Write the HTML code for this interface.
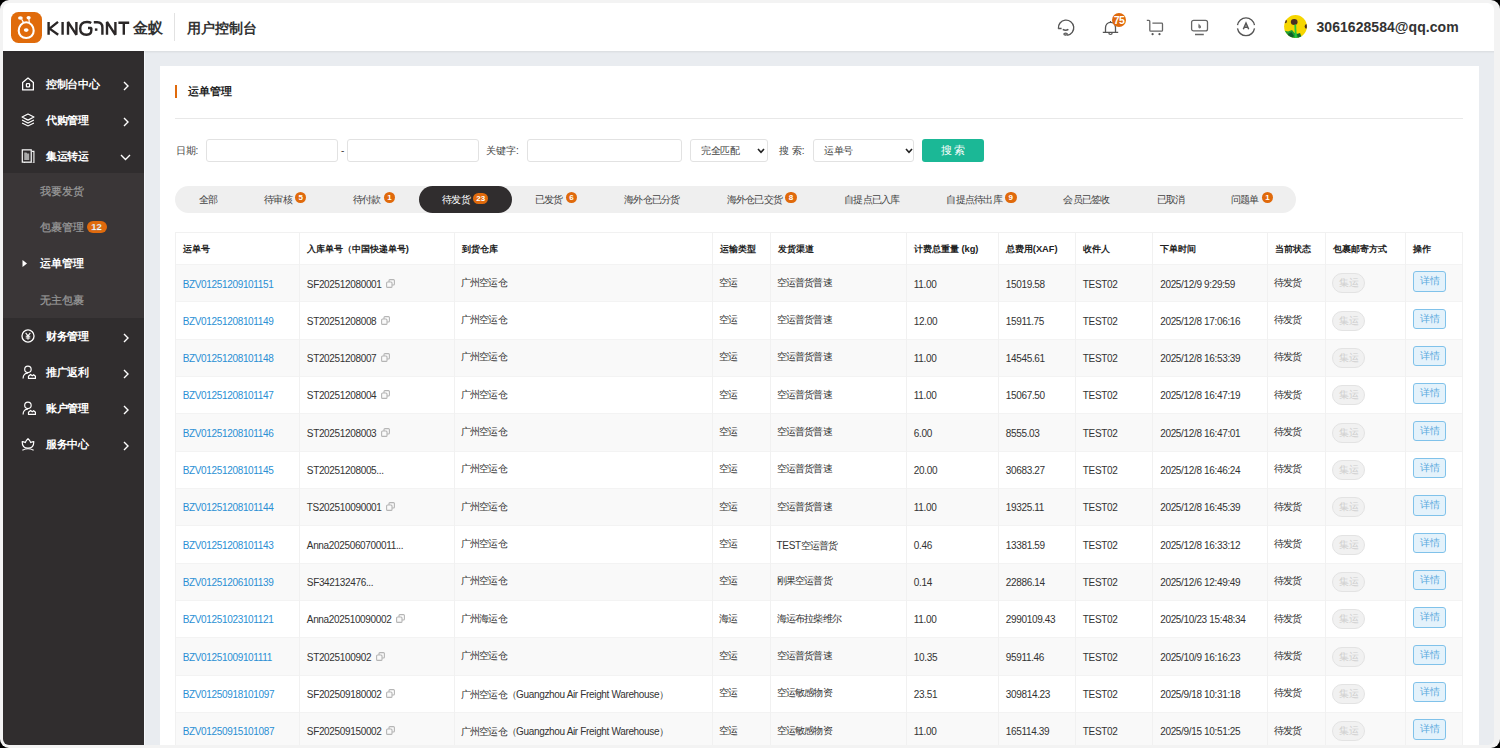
<!DOCTYPE html>
<html><head><meta charset="utf-8">
<style>
html,body{margin:0;padding:0;}
body{width:1500px;height:748px;overflow:hidden;position:relative;background:#000;font-family:"Liberation Sans", sans-serif;}
.abs{position:absolute;}
#frame{position:absolute;left:0;top:0;width:1500px;height:748px;background:#f3f3f3;border-radius:9px;}
#app{position:absolute;left:3px;top:3px;width:1491px;height:742px;border-radius:6px;overflow:hidden;background:#e9ecf0;}
#app > *{}
.tb{position:absolute;}
.th{position:absolute;font-size:9.3px;font-weight:bold;color:#222;white-space:nowrap;}
.td{position:absolute;font-size:10px;letter-spacing:-0.34px;color:#333;white-space:nowrap;}
.lk{color:#2a8fd4;}
.c{font-size:9.8px;letter-spacing:-0.8px;}
.cp{vertical-align:0px;}
.pill{position:relative;top:-1.5px;display:inline-block;width:31px;height:18px;line-height:18px;border:1px solid #e3e3e3;border-radius:10px;background:#f1f1f1;color:#cfcfcf;text-align:center;font-size:9.5px;vertical-align:middle;margin-left:-0.5px;}
.det{position:relative;top:-1.5px;display:inline-block;width:30.8px;height:18.3px;line-height:18.3px;border:1px solid #80c2ea;border-radius:3px;background:#e4f2fb;color:#5aa9dd;text-align:center;font-size:9.5px;vertical-align:middle;margin-top:-3.5px}
.tab{position:absolute;top:186px;height:27px;line-height:28.5px;text-align:center;font-size:10.2px;letter-spacing:-0.75px;color:#444;white-space:nowrap;}
.tab.act{background:#302d2e;border-radius:13.5px;color:#fff;}
.tt{display:inline-block;}
.bdg{letter-spacing:0;display:inline-block;width:11.6px;height:11.6px;line-height:11.6px;border-radius:6px;background:#e06a0c;color:#fff;font-size:8px;font-weight:bold;vertical-align:top;margin-top:5.8px;margin-left:3.1px;text-align:center;}
.bdg.w{width:15.2px;height:11px;line-height:11px;margin-top:6.5px;}
.sb{position:absolute;height:36px;line-height:36px;font-size:11px;letter-spacing:-0.3px;font-weight:bold;color:#fff;white-space:nowrap;}
.sub{position:absolute;height:36px;line-height:36px;font-size:10.5px;-webkit-text-stroke:0.25px #999;color:#999;white-space:nowrap;}
.sub.act{color:#fff;font-weight:bold;-webkit-text-stroke:0;}
.sbdg{display:inline-block;width:20px;height:12px;line-height:12px;border-radius:6px;background:#e06a0c;color:#fff;font-size:9.5px;font-weight:bold;text-align:center;vertical-align:middle;margin-left:2.5px;margin-top:-4px;}
.lbl{position:absolute;font-size:10px;color:#444;white-space:nowrap;line-height:23px;top:139px;}
.inp{position:absolute;top:139px;height:23px;box-sizing:border-box;border:1px solid #e2e2e2;border-radius:3px;background:#fff;}
.seltxt{position:absolute;font-size:10px;letter-spacing:-0.5px;color:#444;line-height:21px;left:10px;top:0;}
</style></head><body>
<div id="frame"></div>
<div id="app">
<div style="position:absolute;left:-3px;top:-3px;width:1500px;height:760px;">
<div class="abs" style="left:3px;top:51px;width:141px;height:700px;background:#302d2e"></div>
<div class="abs" style="left:3px;top:173px;width:141px;height:144.5px;background:#3a3637"></div>
<svg class="abs" style="left:21px;top:76.5px" width="14" height="14" viewBox="0 0 13 13"><path d="M1.5 5.2 L6.5 1 L11.5 5.2 V12 H1.5 Z" fill="none" stroke="#fff" stroke-width="1.2" stroke-linejoin="round"/><rect x="5" y="6.2" width="3" height="3" rx="0.6" fill="none" stroke="#fff" stroke-width="1.1"/></svg>
<div class="sb" style="left:46px;top:65.5px">控制台中心</div>
<svg class="abs" style="left:122px;top:81.0px" width="8" height="10" viewBox="0 0 8 10"><path d="M2 1 L6 5 L2 9" fill="none" stroke="#fff" stroke-width="1.4"/></svg>
<svg class="abs" style="left:21px;top:112.5px" width="14" height="14" viewBox="0 0 13 13"><path d="M6.5 1 L12 3.8 L6.5 6.6 L1 3.8 Z" fill="none" stroke="#fff" stroke-width="1.1" stroke-linejoin="round"/><path d="M1 6.5 L6.5 9.3 L12 6.5" fill="none" stroke="#fff" stroke-width="1.1"/><path d="M1 9.2 L6.5 12 L12 9.2" fill="none" stroke="#fff" stroke-width="1.1"/></svg>
<div class="sb" style="left:46px;top:101.5px">代购管理</div>
<svg class="abs" style="left:122px;top:117.0px" width="8" height="10" viewBox="0 0 8 10"><path d="M2 1 L6 5 L2 9" fill="none" stroke="#fff" stroke-width="1.4"/></svg>
<svg class="abs" style="left:21px;top:148.5px" width="14" height="14" viewBox="0 0 13 13"><rect x="1.2" y="0.8" width="8.3" height="11.4" fill="none" stroke="#fff" stroke-width="1.1"/><path d="M10.3 2.2 H12 V13.2 H3.2 V12.4" fill="none" stroke="#fff" stroke-width="1"/><path d="M3 3.2 H5 L5.8 4.2 H7.6 V10.2 H3 Z" fill="#aaa"/></svg>
<div class="sb" style="left:46px;top:137.5px">集运转运</div>
<svg class="abs" style="left:120px;top:152.5px" width="11" height="8" viewBox="0 0 11 8"><path d="M1 2 L5.5 6.5 L10 2" fill="none" stroke="#fff" stroke-width="1.4"/></svg>
<svg class="abs" style="left:21px;top:328.5px" width="14" height="14" viewBox="0 0 13 13"><circle cx="6.5" cy="6.5" r="5.6" fill="none" stroke="#fff" stroke-width="1.2"/><path d="M4.3 3.6 L6.5 6.4 L8.7 3.6 M6.5 6.4 V10 M4.4 6.8 H8.6 M4.4 8.4 H8.6" fill="none" stroke="#fff" stroke-width="1"/></svg>
<div class="sb" style="left:46px;top:317.5px">财务管理</div>
<svg class="abs" style="left:122px;top:333.0px" width="8" height="10" viewBox="0 0 8 10"><path d="M2 1 L6 5 L2 9" fill="none" stroke="#fff" stroke-width="1.4"/></svg>
<svg class="abs" style="left:22px;top:364.5px" width="14" height="14" viewBox="0 0 13 13"><circle cx="5.5" cy="4" r="3" fill="none" stroke="#fff" stroke-width="1.1"/><path d="M1 12.5 C1 9 3 7.5 5.5 7.5" fill="none" stroke="#fff" stroke-width="1.1"/><path d="M6 12.5 H12.5 V10.5 L10.8 9 L9.5 10 L8 8.8 L6 10.5 Z" fill="none" stroke="#fff" stroke-width="1.1" stroke-linejoin="round"/></svg>
<div class="sb" style="left:46px;top:353.5px">推广返利</div>
<svg class="abs" style="left:122px;top:369.0px" width="8" height="10" viewBox="0 0 8 10"><path d="M2 1 L6 5 L2 9" fill="none" stroke="#fff" stroke-width="1.4"/></svg>
<svg class="abs" style="left:22px;top:400.5px" width="14" height="14" viewBox="0 0 13 13"><circle cx="5.5" cy="4" r="3" fill="none" stroke="#fff" stroke-width="1.1"/><path d="M1 12.5 C1 9 3 7.5 5.5 7.5" fill="none" stroke="#fff" stroke-width="1.1"/><path d="M6 12.5 H12.5 V10.5 L10.8 9 L9.5 10 L8 8.8 L6 10.5 Z" fill="none" stroke="#fff" stroke-width="1.1" stroke-linejoin="round"/></svg>
<div class="sb" style="left:46px;top:389.5px">账户管理</div>
<svg class="abs" style="left:122px;top:405.0px" width="8" height="10" viewBox="0 0 8 10"><path d="M2 1 L6 5 L2 9" fill="none" stroke="#fff" stroke-width="1.4"/></svg>
<svg class="abs" style="left:21px;top:436.5px" width="14" height="14" viewBox="0 0 13 13"><path d="M6.5 1.6 C8 2.9 8.8 4.2 9 5.2 C10 4.6 11 4.3 11.9 4.3 C11.9 8.4 9.8 10.4 6.5 10.4 C3.2 10.4 1.1 8.4 1.1 4.3 C2 4.3 3 4.6 4 5.2 C4.2 4.2 5 2.9 6.5 1.6 Z" fill="none" stroke="#fff" stroke-width="1.1" stroke-linejoin="round"/><path d="M1.3 12.3 Q3.5 10.9 6.5 10.9 Q9.5 10.9 11.7 12.3" fill="none" stroke="#fff" stroke-width="1.1"/></svg>
<div class="sb" style="left:46px;top:425.5px">服务中心</div>
<svg class="abs" style="left:122px;top:441.0px" width="8" height="10" viewBox="0 0 8 10"><path d="M2 1 L6 5 L2 9" fill="none" stroke="#fff" stroke-width="1.4"/></svg>
<div class="sub" style="left:40px;top:173.4px">我要发货</div>
<div class="sub" style="left:40px;top:209.4px">包裹管理<span class="sbdg">12</span></div>
<div class="sub act" style="left:40px;top:245.2px">运单管理</div>
<svg class="abs" style="left:22px;top:259.7px" width="6" height="7" viewBox="0 0 6 7"><path d="M0.5 0 L5 3.5 L0.5 7 Z" fill="#fff"/></svg>
<div class="sub" style="left:40px;top:281.5px">无主包裹</div>
<div class="abs" style="left:144px;top:51px;width:1px;height:700px;background:#f5f8fc"></div>

<!-- card -->
<div class="abs" style="left:160px;top:66px;width:1319px;height:700px;background:#fff"></div>
<div class="abs" style="left:175px;top:85px;width:2px;height:13px;background:#e06a0c"></div>
<div class="abs" style="left:188px;top:79px;font-size:10.5px;line-height:24px;color:#222;font-weight:bold;white-space:nowrap">运单管理</div>
<div class="abs" style="left:175px;top:118px;width:1288px;height:1px;background:#e8e8e8"></div>

<div class="lbl" style="left:175.5px">日期:</div>
<div class="inp" style="left:206px;width:132px"></div>
<div class="lbl" style="left:341px">-</div>
<div class="inp" style="left:347px;width:131.5px"></div>
<div class="lbl" style="left:486px">关键字:</div>
<div class="inp" style="left:527px;width:155px"></div>
<div class="inp" style="left:690px;width:77.5px"><span class="seltxt">完全匹配</span>
 <svg class="abs" style="left:65.5px;top:8px" width="8" height="6" viewBox="0 0 8 6"><path d="M1 1 L4 4.3 L7 1" fill="none" stroke="#222" stroke-width="1.6"/></svg></div>
<div class="lbl" style="left:779px">搜 索:</div>
<div class="inp" style="left:813px;width:100.5px"><span class="seltxt">运单号</span>
 <svg class="abs" style="left:90.5px;top:8px" width="8" height="6" viewBox="0 0 8 6"><path d="M1 1 L4 4.3 L7 1" fill="none" stroke="#222" stroke-width="1.6"/></svg></div>
<div class="abs" style="left:922px;top:139px;width:62px;height:23px;border-radius:3px;background:#1bb896;color:#fff;font-size:10.5px;line-height:23px;text-align:center;white-space:nowrap">搜 索</div>

<div class="abs" style="left:175px;top:186px;width:1121.3px;height:27px;border-radius:13.5px;background:#efefef"></div>
<div class="tab" style="left:175.0px;width:66.0px"><span class="tt">全部</span></div>
<div class="tab" style="left:241.0px;width:88.5px"><span class="tt">待审核</span><span class="bdg">5</span></div>
<div class="tab" style="left:329.5px;width:89.19999999999999px"><span class="tt">待付款</span><span class="bdg">1</span></div>
<div class="tab act" style="left:418.7px;width:93.10000000000002px"><span class="tt">待发货</span><span class="bdg w">23</span></div>
<div class="tab" style="left:511.8px;width:88.69999999999999px"><span class="tt">已发货</span><span class="bdg">6</span></div>
<div class="tab" style="left:600.5px;width:102.70000000000005px"><span class="tt">海外仓已分货</span></div>
<div class="tab" style="left:703.2px;width:117.19999999999993px"><span class="tt">海外仓已交货</span><span class="bdg">8</span></div>
<div class="tab" style="left:820.4px;width:102.80000000000007px"><span class="tt">自提点已入库</span></div>
<div class="tab" style="left:923.2px;width:116.70000000000005px"><span class="tt">自提点待出库</span><span class="bdg">9</span></div>
<div class="tab" style="left:1039.9px;width:93.39999999999986px"><span class="tt">会员已签收</span></div>
<div class="tab" style="left:1133.3px;width:74.40000000000009px"><span class="tt">已取消</span></div>
<div class="tab" style="left:1207.7px;width:88.59999999999991px"><span class="tt">问题单</span><span class="bdg">1</span></div>

<div class="tb" style="left:175.2px;top:232.0px;width:1287.2px;height:32.0px;background:#fff"></div>
<div class="tb" style="left:175.2px;top:264.0px;width:1287.2px;height:37.33px;background:#f9f9f9;border-top:1px solid #f3f3f3;box-sizing:border-box"></div>
<div class="tb" style="left:175.2px;top:301.33px;width:1287.2px;height:37.33px;background:#ffffff;border-top:1px solid #f3f3f3;box-sizing:border-box"></div>
<div class="tb" style="left:175.2px;top:338.65999999999997px;width:1287.2px;height:37.33px;background:#f9f9f9;border-top:1px solid #f3f3f3;box-sizing:border-box"></div>
<div class="tb" style="left:175.2px;top:375.99px;width:1287.2px;height:37.33px;background:#ffffff;border-top:1px solid #f3f3f3;box-sizing:border-box"></div>
<div class="tb" style="left:175.2px;top:413.32px;width:1287.2px;height:37.33px;background:#f9f9f9;border-top:1px solid #f3f3f3;box-sizing:border-box"></div>
<div class="tb" style="left:175.2px;top:450.65px;width:1287.2px;height:37.33px;background:#ffffff;border-top:1px solid #f3f3f3;box-sizing:border-box"></div>
<div class="tb" style="left:175.2px;top:487.98px;width:1287.2px;height:37.33px;background:#f9f9f9;border-top:1px solid #f3f3f3;box-sizing:border-box"></div>
<div class="tb" style="left:175.2px;top:525.31px;width:1287.2px;height:37.33px;background:#ffffff;border-top:1px solid #f3f3f3;box-sizing:border-box"></div>
<div class="tb" style="left:175.2px;top:562.64px;width:1287.2px;height:37.33px;background:#f9f9f9;border-top:1px solid #f3f3f3;box-sizing:border-box"></div>
<div class="tb" style="left:175.2px;top:599.97px;width:1287.2px;height:37.33px;background:#ffffff;border-top:1px solid #f3f3f3;box-sizing:border-box"></div>
<div class="tb" style="left:175.2px;top:637.3px;width:1287.2px;height:37.33px;background:#f9f9f9;border-top:1px solid #f3f3f3;box-sizing:border-box"></div>
<div class="tb" style="left:175.2px;top:674.63px;width:1287.2px;height:37.33px;background:#ffffff;border-top:1px solid #f3f3f3;box-sizing:border-box"></div>
<div class="tb" style="left:175.2px;top:711.96px;width:1287.2px;height:37.33px;background:#f9f9f9;border-top:1px solid #f3f3f3;box-sizing:border-box"></div>
<div class="tb" style="left:175.2px;top:232.0px;width:1287.2px;height:1px;background:#f1f1f1"></div>
<div class="tb" style="left:174.7px;top:232.0px;width:1px;height:528.0px;background:#f1f1f1"></div>
<div class="tb" style="left:298.8px;top:232.0px;width:1px;height:528.0px;background:#f1f1f1"></div>
<div class="tb" style="left:454.1px;top:232.0px;width:1px;height:528.0px;background:#f1f1f1"></div>
<div class="tb" style="left:712.0px;top:232.0px;width:1px;height:528.0px;background:#f1f1f1"></div>
<div class="tb" style="left:769.8px;top:232.0px;width:1px;height:528.0px;background:#f1f1f1"></div>
<div class="tb" style="left:905.8px;top:232.0px;width:1px;height:528.0px;background:#f1f1f1"></div>
<div class="tb" style="left:997.8px;top:232.0px;width:1px;height:528.0px;background:#f1f1f1"></div>
<div class="tb" style="left:1074.8px;top:232.0px;width:1px;height:528.0px;background:#f1f1f1"></div>
<div class="tb" style="left:1152.2px;top:232.0px;width:1px;height:528.0px;background:#f1f1f1"></div>
<div class="tb" style="left:1266.8px;top:232.0px;width:1px;height:528.0px;background:#f1f1f1"></div>
<div class="tb" style="left:1324.8px;top:232.0px;width:1px;height:528.0px;background:#f1f1f1"></div>
<div class="tb" style="left:1405.4px;top:232.0px;width:1px;height:528.0px;background:#f1f1f1"></div>
<div class="tb" style="left:1461.9px;top:232.0px;width:1px;height:528.0px;background:#f1f1f1"></div>
<div class="th" style="left:182.7px;top:232.6px;height:32.0px;line-height:32.0px">运单号</div>
<div class="th" style="left:306.8px;top:232.6px;height:32.0px;line-height:32.0px">入库单号（中国快递单号)</div>
<div class="th" style="left:462.1px;top:232.6px;height:32.0px;line-height:32.0px">到货仓库</div>
<div class="th" style="left:720.0px;top:232.6px;height:32.0px;line-height:32.0px">运输类型</div>
<div class="th" style="left:777.8px;top:232.6px;height:32.0px;line-height:32.0px">发货渠道</div>
<div class="th" style="left:913.8px;top:232.6px;height:32.0px;line-height:32.0px">计费总重量 (kg)</div>
<div class="th" style="left:1005.8px;top:232.6px;height:32.0px;line-height:32.0px">总费用(XAF)</div>
<div class="th" style="left:1082.8px;top:232.6px;height:32.0px;line-height:32.0px">收件人</div>
<div class="th" style="left:1160.2px;top:232.6px;height:32.0px;line-height:32.0px">下单时间</div>
<div class="th" style="left:1274.8px;top:232.6px;height:32.0px;line-height:32.0px">当前状态</div>
<div class="th" style="left:1332.8px;top:232.6px;height:32.0px;line-height:32.0px">包裹邮寄方式</div>
<div class="th" style="left:1413.4px;top:232.6px;height:32.0px;line-height:32.0px">操作</div>
<div class="td" style="left:182.7px;top:265.5px;height:37.33px;line-height:37.33px"><span class="lk">BZV01251209101151</span></div>
<div class="td" style="left:306.8px;top:265.5px;height:37.33px;line-height:37.33px">SF202512080001 &nbsp;<svg class="cp" width="9" height="9" viewBox="0 0 9 9"><rect x="3" y="0.6" width="5.4" height="5.4" rx="1" fill="none" stroke="#b5b5b5" stroke-width="1.1"/><rect x="0.6" y="3" width="5.4" height="5.4" rx="1" fill="#fafafa" stroke="#b5b5b5" stroke-width="1.1"/></svg></div>
<div class="td" style="left:460.90000000000003px;top:263.7px;height:37.33px;line-height:37.33px"><span class="c">广州空运仓</span></div>
<div class="td" style="left:718.8px;top:263.7px;height:37.33px;line-height:37.33px"><span class="c">空运</span></div>
<div class="td" style="left:776.5999999999999px;top:263.7px;height:37.33px;line-height:37.33px"><span class="c">空运普货普速</span></div>
<div class="td" style="left:913.8px;top:265.5px;height:37.33px;line-height:37.33px">11.00</div>
<div class="td" style="left:1005.8px;top:265.5px;height:37.33px;line-height:37.33px">15019.58</div>
<div class="td" style="left:1082.8px;top:265.5px;height:37.33px;line-height:37.33px">TEST02</div>
<div class="td" style="left:1160.2px;top:265.5px;height:37.33px;line-height:37.33px">2025/12/9 9:29:59</div>
<div class="td" style="left:1273.6px;top:263.7px;height:37.33px;line-height:37.33px"><span class="c">待发货</span></div>
<div class="td" style="left:1332.8px;top:265.5px;height:37.33px;line-height:37.33px"><span class="pill">集运</span></div>
<div class="td" style="left:1413.4px;top:265.5px;height:37.33px;line-height:37.33px"><span class="det">详情</span></div>
<div class="td" style="left:182.7px;top:302.83px;height:37.33px;line-height:37.33px"><span class="lk">BZV01251208101149</span></div>
<div class="td" style="left:306.8px;top:302.83px;height:37.33px;line-height:37.33px">ST20251208008 &nbsp;<svg class="cp" width="9" height="9" viewBox="0 0 9 9"><rect x="3" y="0.6" width="5.4" height="5.4" rx="1" fill="none" stroke="#b5b5b5" stroke-width="1.1"/><rect x="0.6" y="3" width="5.4" height="5.4" rx="1" fill="#fafafa" stroke="#b5b5b5" stroke-width="1.1"/></svg></div>
<div class="td" style="left:460.90000000000003px;top:301.03px;height:37.33px;line-height:37.33px"><span class="c">广州空运仓</span></div>
<div class="td" style="left:718.8px;top:301.03px;height:37.33px;line-height:37.33px"><span class="c">空运</span></div>
<div class="td" style="left:776.5999999999999px;top:301.03px;height:37.33px;line-height:37.33px"><span class="c">空运普货普速</span></div>
<div class="td" style="left:913.8px;top:302.83px;height:37.33px;line-height:37.33px">12.00</div>
<div class="td" style="left:1005.8px;top:302.83px;height:37.33px;line-height:37.33px">15911.75</div>
<div class="td" style="left:1082.8px;top:302.83px;height:37.33px;line-height:37.33px">TEST02</div>
<div class="td" style="left:1160.2px;top:302.83px;height:37.33px;line-height:37.33px">2025/12/8 17:06:16</div>
<div class="td" style="left:1273.6px;top:301.03px;height:37.33px;line-height:37.33px"><span class="c">待发货</span></div>
<div class="td" style="left:1332.8px;top:302.83px;height:37.33px;line-height:37.33px"><span class="pill">集运</span></div>
<div class="td" style="left:1413.4px;top:302.83px;height:37.33px;line-height:37.33px"><span class="det">详情</span></div>
<div class="td" style="left:182.7px;top:340.15999999999997px;height:37.33px;line-height:37.33px"><span class="lk">BZV01251208101148</span></div>
<div class="td" style="left:306.8px;top:340.15999999999997px;height:37.33px;line-height:37.33px">ST20251208007 &nbsp;<svg class="cp" width="9" height="9" viewBox="0 0 9 9"><rect x="3" y="0.6" width="5.4" height="5.4" rx="1" fill="none" stroke="#b5b5b5" stroke-width="1.1"/><rect x="0.6" y="3" width="5.4" height="5.4" rx="1" fill="#fafafa" stroke="#b5b5b5" stroke-width="1.1"/></svg></div>
<div class="td" style="left:460.90000000000003px;top:338.35999999999996px;height:37.33px;line-height:37.33px"><span class="c">广州空运仓</span></div>
<div class="td" style="left:718.8px;top:338.35999999999996px;height:37.33px;line-height:37.33px"><span class="c">空运</span></div>
<div class="td" style="left:776.5999999999999px;top:338.35999999999996px;height:37.33px;line-height:37.33px"><span class="c">空运普货普速</span></div>
<div class="td" style="left:913.8px;top:340.15999999999997px;height:37.33px;line-height:37.33px">11.00</div>
<div class="td" style="left:1005.8px;top:340.15999999999997px;height:37.33px;line-height:37.33px">14545.61</div>
<div class="td" style="left:1082.8px;top:340.15999999999997px;height:37.33px;line-height:37.33px">TEST02</div>
<div class="td" style="left:1160.2px;top:340.15999999999997px;height:37.33px;line-height:37.33px">2025/12/8 16:53:39</div>
<div class="td" style="left:1273.6px;top:338.35999999999996px;height:37.33px;line-height:37.33px"><span class="c">待发货</span></div>
<div class="td" style="left:1332.8px;top:340.15999999999997px;height:37.33px;line-height:37.33px"><span class="pill">集运</span></div>
<div class="td" style="left:1413.4px;top:340.15999999999997px;height:37.33px;line-height:37.33px"><span class="det">详情</span></div>
<div class="td" style="left:182.7px;top:377.49px;height:37.33px;line-height:37.33px"><span class="lk">BZV01251208101147</span></div>
<div class="td" style="left:306.8px;top:377.49px;height:37.33px;line-height:37.33px">ST20251208004 &nbsp;<svg class="cp" width="9" height="9" viewBox="0 0 9 9"><rect x="3" y="0.6" width="5.4" height="5.4" rx="1" fill="none" stroke="#b5b5b5" stroke-width="1.1"/><rect x="0.6" y="3" width="5.4" height="5.4" rx="1" fill="#fafafa" stroke="#b5b5b5" stroke-width="1.1"/></svg></div>
<div class="td" style="left:460.90000000000003px;top:375.69px;height:37.33px;line-height:37.33px"><span class="c">广州空运仓</span></div>
<div class="td" style="left:718.8px;top:375.69px;height:37.33px;line-height:37.33px"><span class="c">空运</span></div>
<div class="td" style="left:776.5999999999999px;top:375.69px;height:37.33px;line-height:37.33px"><span class="c">空运普货普速</span></div>
<div class="td" style="left:913.8px;top:377.49px;height:37.33px;line-height:37.33px">11.00</div>
<div class="td" style="left:1005.8px;top:377.49px;height:37.33px;line-height:37.33px">15067.50</div>
<div class="td" style="left:1082.8px;top:377.49px;height:37.33px;line-height:37.33px">TEST02</div>
<div class="td" style="left:1160.2px;top:377.49px;height:37.33px;line-height:37.33px">2025/12/8 16:47:19</div>
<div class="td" style="left:1273.6px;top:375.69px;height:37.33px;line-height:37.33px"><span class="c">待发货</span></div>
<div class="td" style="left:1332.8px;top:377.49px;height:37.33px;line-height:37.33px"><span class="pill">集运</span></div>
<div class="td" style="left:1413.4px;top:377.49px;height:37.33px;line-height:37.33px"><span class="det">详情</span></div>
<div class="td" style="left:182.7px;top:414.82px;height:37.33px;line-height:37.33px"><span class="lk">BZV01251208101146</span></div>
<div class="td" style="left:306.8px;top:414.82px;height:37.33px;line-height:37.33px">ST20251208003 &nbsp;<svg class="cp" width="9" height="9" viewBox="0 0 9 9"><rect x="3" y="0.6" width="5.4" height="5.4" rx="1" fill="none" stroke="#b5b5b5" stroke-width="1.1"/><rect x="0.6" y="3" width="5.4" height="5.4" rx="1" fill="#fafafa" stroke="#b5b5b5" stroke-width="1.1"/></svg></div>
<div class="td" style="left:460.90000000000003px;top:413.02px;height:37.33px;line-height:37.33px"><span class="c">广州空运仓</span></div>
<div class="td" style="left:718.8px;top:413.02px;height:37.33px;line-height:37.33px"><span class="c">空运</span></div>
<div class="td" style="left:776.5999999999999px;top:413.02px;height:37.33px;line-height:37.33px"><span class="c">空运普货普速</span></div>
<div class="td" style="left:913.8px;top:414.82px;height:37.33px;line-height:37.33px">6.00</div>
<div class="td" style="left:1005.8px;top:414.82px;height:37.33px;line-height:37.33px">8555.03</div>
<div class="td" style="left:1082.8px;top:414.82px;height:37.33px;line-height:37.33px">TEST02</div>
<div class="td" style="left:1160.2px;top:414.82px;height:37.33px;line-height:37.33px">2025/12/8 16:47:01</div>
<div class="td" style="left:1273.6px;top:413.02px;height:37.33px;line-height:37.33px"><span class="c">待发货</span></div>
<div class="td" style="left:1332.8px;top:414.82px;height:37.33px;line-height:37.33px"><span class="pill">集运</span></div>
<div class="td" style="left:1413.4px;top:414.82px;height:37.33px;line-height:37.33px"><span class="det">详情</span></div>
<div class="td" style="left:182.7px;top:452.15px;height:37.33px;line-height:37.33px"><span class="lk">BZV01251208101145</span></div>
<div class="td" style="left:306.8px;top:452.15px;height:37.33px;line-height:37.33px">ST20251208005...</div>
<div class="td" style="left:460.90000000000003px;top:450.34999999999997px;height:37.33px;line-height:37.33px"><span class="c">广州空运仓</span></div>
<div class="td" style="left:718.8px;top:450.34999999999997px;height:37.33px;line-height:37.33px"><span class="c">空运</span></div>
<div class="td" style="left:776.5999999999999px;top:450.34999999999997px;height:37.33px;line-height:37.33px"><span class="c">空运普货普速</span></div>
<div class="td" style="left:913.8px;top:452.15px;height:37.33px;line-height:37.33px">20.00</div>
<div class="td" style="left:1005.8px;top:452.15px;height:37.33px;line-height:37.33px">30683.27</div>
<div class="td" style="left:1082.8px;top:452.15px;height:37.33px;line-height:37.33px">TEST02</div>
<div class="td" style="left:1160.2px;top:452.15px;height:37.33px;line-height:37.33px">2025/12/8 16:46:24</div>
<div class="td" style="left:1273.6px;top:450.34999999999997px;height:37.33px;line-height:37.33px"><span class="c">待发货</span></div>
<div class="td" style="left:1332.8px;top:452.15px;height:37.33px;line-height:37.33px"><span class="pill">集运</span></div>
<div class="td" style="left:1413.4px;top:452.15px;height:37.33px;line-height:37.33px"><span class="det">详情</span></div>
<div class="td" style="left:182.7px;top:489.48px;height:37.33px;line-height:37.33px"><span class="lk">BZV01251208101144</span></div>
<div class="td" style="left:306.8px;top:489.48px;height:37.33px;line-height:37.33px">TS202510090001 &nbsp;<svg class="cp" width="9" height="9" viewBox="0 0 9 9"><rect x="3" y="0.6" width="5.4" height="5.4" rx="1" fill="none" stroke="#b5b5b5" stroke-width="1.1"/><rect x="0.6" y="3" width="5.4" height="5.4" rx="1" fill="#fafafa" stroke="#b5b5b5" stroke-width="1.1"/></svg></div>
<div class="td" style="left:460.90000000000003px;top:487.68px;height:37.33px;line-height:37.33px"><span class="c">广州空运仓</span></div>
<div class="td" style="left:718.8px;top:487.68px;height:37.33px;line-height:37.33px"><span class="c">空运</span></div>
<div class="td" style="left:776.5999999999999px;top:487.68px;height:37.33px;line-height:37.33px"><span class="c">空运普货普速</span></div>
<div class="td" style="left:913.8px;top:489.48px;height:37.33px;line-height:37.33px">11.00</div>
<div class="td" style="left:1005.8px;top:489.48px;height:37.33px;line-height:37.33px">19325.11</div>
<div class="td" style="left:1082.8px;top:489.48px;height:37.33px;line-height:37.33px">TEST02</div>
<div class="td" style="left:1160.2px;top:489.48px;height:37.33px;line-height:37.33px">2025/12/8 16:45:39</div>
<div class="td" style="left:1273.6px;top:487.68px;height:37.33px;line-height:37.33px"><span class="c">待发货</span></div>
<div class="td" style="left:1332.8px;top:489.48px;height:37.33px;line-height:37.33px"><span class="pill">集运</span></div>
<div class="td" style="left:1413.4px;top:489.48px;height:37.33px;line-height:37.33px"><span class="det">详情</span></div>
<div class="td" style="left:182.7px;top:526.81px;height:37.33px;line-height:37.33px"><span class="lk">BZV01251208101143</span></div>
<div class="td" style="left:306.8px;top:526.81px;height:37.33px;line-height:37.33px">Anna2025060700011...</div>
<div class="td" style="left:460.90000000000003px;top:525.01px;height:37.33px;line-height:37.33px"><span class="c">广州空运仓</span></div>
<div class="td" style="left:718.8px;top:525.01px;height:37.33px;line-height:37.33px"><span class="c">空运</span></div>
<div class="td" style="left:776.5999999999999px;top:526.81px;height:37.33px;line-height:37.33px">TEST<span class="c">空运普货</span></div>
<div class="td" style="left:913.8px;top:526.81px;height:37.33px;line-height:37.33px">0.46</div>
<div class="td" style="left:1005.8px;top:526.81px;height:37.33px;line-height:37.33px">13381.59</div>
<div class="td" style="left:1082.8px;top:526.81px;height:37.33px;line-height:37.33px">TEST02</div>
<div class="td" style="left:1160.2px;top:526.81px;height:37.33px;line-height:37.33px">2025/12/8 16:33:12</div>
<div class="td" style="left:1273.6px;top:525.01px;height:37.33px;line-height:37.33px"><span class="c">待发货</span></div>
<div class="td" style="left:1332.8px;top:526.81px;height:37.33px;line-height:37.33px"><span class="pill">集运</span></div>
<div class="td" style="left:1413.4px;top:526.81px;height:37.33px;line-height:37.33px"><span class="det">详情</span></div>
<div class="td" style="left:182.7px;top:564.14px;height:37.33px;line-height:37.33px"><span class="lk">BZV01251206101139</span></div>
<div class="td" style="left:306.8px;top:564.14px;height:37.33px;line-height:37.33px">SF342132476...</div>
<div class="td" style="left:460.90000000000003px;top:562.34px;height:37.33px;line-height:37.33px"><span class="c">广州空运仓</span></div>
<div class="td" style="left:718.8px;top:562.34px;height:37.33px;line-height:37.33px"><span class="c">空运</span></div>
<div class="td" style="left:776.5999999999999px;top:562.34px;height:37.33px;line-height:37.33px"><span class="c">刚果空运普货</span></div>
<div class="td" style="left:913.8px;top:564.14px;height:37.33px;line-height:37.33px">0.14</div>
<div class="td" style="left:1005.8px;top:564.14px;height:37.33px;line-height:37.33px">22886.14</div>
<div class="td" style="left:1082.8px;top:564.14px;height:37.33px;line-height:37.33px">TEST02</div>
<div class="td" style="left:1160.2px;top:564.14px;height:37.33px;line-height:37.33px">2025/12/6 12:49:49</div>
<div class="td" style="left:1273.6px;top:562.34px;height:37.33px;line-height:37.33px"><span class="c">待发货</span></div>
<div class="td" style="left:1332.8px;top:564.14px;height:37.33px;line-height:37.33px"><span class="pill">集运</span></div>
<div class="td" style="left:1413.4px;top:564.14px;height:37.33px;line-height:37.33px"><span class="det">详情</span></div>
<div class="td" style="left:182.7px;top:601.47px;height:37.33px;line-height:37.33px"><span class="lk">BZV01251023101121</span></div>
<div class="td" style="left:306.8px;top:601.47px;height:37.33px;line-height:37.33px">Anna202510090002 &nbsp;<svg class="cp" width="9" height="9" viewBox="0 0 9 9"><rect x="3" y="0.6" width="5.4" height="5.4" rx="1" fill="none" stroke="#b5b5b5" stroke-width="1.1"/><rect x="0.6" y="3" width="5.4" height="5.4" rx="1" fill="#fafafa" stroke="#b5b5b5" stroke-width="1.1"/></svg></div>
<div class="td" style="left:460.90000000000003px;top:599.6700000000001px;height:37.33px;line-height:37.33px"><span class="c">广州海运仓</span></div>
<div class="td" style="left:718.8px;top:599.6700000000001px;height:37.33px;line-height:37.33px"><span class="c">海运</span></div>
<div class="td" style="left:776.5999999999999px;top:599.6700000000001px;height:37.33px;line-height:37.33px"><span class="c">海运布拉柴维尔</span></div>
<div class="td" style="left:913.8px;top:601.47px;height:37.33px;line-height:37.33px">11.00</div>
<div class="td" style="left:1005.8px;top:601.47px;height:37.33px;line-height:37.33px">2990109.43</div>
<div class="td" style="left:1082.8px;top:601.47px;height:37.33px;line-height:37.33px">TEST02</div>
<div class="td" style="left:1160.2px;top:601.47px;height:37.33px;line-height:37.33px">2025/10/23 15:48:34</div>
<div class="td" style="left:1273.6px;top:599.6700000000001px;height:37.33px;line-height:37.33px"><span class="c">待发货</span></div>
<div class="td" style="left:1332.8px;top:601.47px;height:37.33px;line-height:37.33px"><span class="pill">集运</span></div>
<div class="td" style="left:1413.4px;top:601.47px;height:37.33px;line-height:37.33px"><span class="det">详情</span></div>
<div class="td" style="left:182.7px;top:638.8px;height:37.33px;line-height:37.33px"><span class="lk">BZV01251009101111</span></div>
<div class="td" style="left:306.8px;top:638.8px;height:37.33px;line-height:37.33px">ST2025100902 &nbsp;<svg class="cp" width="9" height="9" viewBox="0 0 9 9"><rect x="3" y="0.6" width="5.4" height="5.4" rx="1" fill="none" stroke="#b5b5b5" stroke-width="1.1"/><rect x="0.6" y="3" width="5.4" height="5.4" rx="1" fill="#fafafa" stroke="#b5b5b5" stroke-width="1.1"/></svg></div>
<div class="td" style="left:460.90000000000003px;top:637.0px;height:37.33px;line-height:37.33px"><span class="c">广州空运仓</span></div>
<div class="td" style="left:718.8px;top:637.0px;height:37.33px;line-height:37.33px"><span class="c">空运</span></div>
<div class="td" style="left:776.5999999999999px;top:637.0px;height:37.33px;line-height:37.33px"><span class="c">空运普货普速</span></div>
<div class="td" style="left:913.8px;top:638.8px;height:37.33px;line-height:37.33px">10.35</div>
<div class="td" style="left:1005.8px;top:638.8px;height:37.33px;line-height:37.33px">95911.46</div>
<div class="td" style="left:1082.8px;top:638.8px;height:37.33px;line-height:37.33px">TEST02</div>
<div class="td" style="left:1160.2px;top:638.8px;height:37.33px;line-height:37.33px">2025/10/9 16:16:23</div>
<div class="td" style="left:1273.6px;top:637.0px;height:37.33px;line-height:37.33px"><span class="c">待发货</span></div>
<div class="td" style="left:1332.8px;top:638.8px;height:37.33px;line-height:37.33px"><span class="pill">集运</span></div>
<div class="td" style="left:1413.4px;top:638.8px;height:37.33px;line-height:37.33px"><span class="det">详情</span></div>
<div class="td" style="left:182.7px;top:676.13px;height:37.33px;line-height:37.33px"><span class="lk">BZV01250918101097</span></div>
<div class="td" style="left:306.8px;top:676.13px;height:37.33px;line-height:37.33px">SF202509180002 &nbsp;<svg class="cp" width="9" height="9" viewBox="0 0 9 9"><rect x="3" y="0.6" width="5.4" height="5.4" rx="1" fill="none" stroke="#b5b5b5" stroke-width="1.1"/><rect x="0.6" y="3" width="5.4" height="5.4" rx="1" fill="#fafafa" stroke="#b5b5b5" stroke-width="1.1"/></svg></div>
<div class="td" style="left:460.90000000000003px;top:676.13px;height:37.33px;line-height:37.33px"><span class="c">广州空运仓（</span>Guangzhou Air Freight Warehouse<span class="c">）</span></div>
<div class="td" style="left:718.8px;top:674.33px;height:37.33px;line-height:37.33px"><span class="c">空运</span></div>
<div class="td" style="left:776.5999999999999px;top:674.33px;height:37.33px;line-height:37.33px"><span class="c">空运敏感物资</span></div>
<div class="td" style="left:913.8px;top:676.13px;height:37.33px;line-height:37.33px">23.51</div>
<div class="td" style="left:1005.8px;top:676.13px;height:37.33px;line-height:37.33px">309814.23</div>
<div class="td" style="left:1082.8px;top:676.13px;height:37.33px;line-height:37.33px">TEST02</div>
<div class="td" style="left:1160.2px;top:676.13px;height:37.33px;line-height:37.33px">2025/9/18 10:31:18</div>
<div class="td" style="left:1273.6px;top:674.33px;height:37.33px;line-height:37.33px"><span class="c">待发货</span></div>
<div class="td" style="left:1332.8px;top:676.13px;height:37.33px;line-height:37.33px"><span class="pill">集运</span></div>
<div class="td" style="left:1413.4px;top:676.13px;height:37.33px;line-height:37.33px"><span class="det">详情</span></div>
<div class="td" style="left:182.7px;top:713.46px;height:37.33px;line-height:37.33px"><span class="lk">BZV01250915101087</span></div>
<div class="td" style="left:306.8px;top:713.46px;height:37.33px;line-height:37.33px">SF202509150002 &nbsp;<svg class="cp" width="9" height="9" viewBox="0 0 9 9"><rect x="3" y="0.6" width="5.4" height="5.4" rx="1" fill="none" stroke="#b5b5b5" stroke-width="1.1"/><rect x="0.6" y="3" width="5.4" height="5.4" rx="1" fill="#fafafa" stroke="#b5b5b5" stroke-width="1.1"/></svg></div>
<div class="td" style="left:460.90000000000003px;top:713.46px;height:37.33px;line-height:37.33px"><span class="c">广州空运仓（</span>Guangzhou Air Freight Warehouse<span class="c">）</span></div>
<div class="td" style="left:718.8px;top:711.6600000000001px;height:37.33px;line-height:37.33px"><span class="c">空运</span></div>
<div class="td" style="left:776.5999999999999px;top:711.6600000000001px;height:37.33px;line-height:37.33px"><span class="c">空运敏感物资</span></div>
<div class="td" style="left:913.8px;top:713.46px;height:37.33px;line-height:37.33px">11.00</div>
<div class="td" style="left:1005.8px;top:713.46px;height:37.33px;line-height:37.33px">165114.39</div>
<div class="td" style="left:1082.8px;top:713.46px;height:37.33px;line-height:37.33px">TEST02</div>
<div class="td" style="left:1160.2px;top:713.46px;height:37.33px;line-height:37.33px">2025/9/15 10:51:25</div>
<div class="td" style="left:1273.6px;top:711.6600000000001px;height:37.33px;line-height:37.33px"><span class="c">待发货</span></div>
<div class="td" style="left:1332.8px;top:713.46px;height:37.33px;line-height:37.33px"><span class="pill">集运</span></div>
<div class="td" style="left:1413.4px;top:713.46px;height:37.33px;line-height:37.33px"><span class="det">详情</span></div>
<!-- header -->
<div class="abs" style="left:0;top:0;width:1500px;height:51px;background:#fff;box-shadow:0 1px 2px rgba(0,0,0,0.08)"></div>
<svg class="abs" style="left:11px;top:11.5px" width="31" height="31" viewBox="0 0 31 31">
<rect x="0" y="0" width="31" height="31" rx="7.5" fill="#e06b0b"/>
<path d="M15.2 10.3 C19.6 10.3 22.7 14.4 22.7 18.7 C22.7 23 19.5 26 15.2 26 C10.9 26 7.7 23 7.7 18.7 C7.7 14.4 10.8 10.3 15.2 10.3 Z" fill="none" stroke="#fff" stroke-width="2.1"/>
<ellipse cx="15.2" cy="18.1" rx="2.4" ry="1.8" fill="#fff"/>
<ellipse cx="9.4" cy="6" rx="2.4" ry="1.8" fill="#fff"/>
<ellipse cx="17.6" cy="5.7" rx="2.1" ry="1.7" fill="#fff"/>
<path d="M10.6 7.3 L12.6 10.6 M17.9 7 L18.3 10.4" stroke="#fff" stroke-width="1.2"/>
</svg>
<svg class="abs" style="left:44px;top:15px" width="90" height="25" viewBox="0 0 90 25"><g fill="none" stroke="#2b2727" stroke-width="2.4" stroke-linejoin="bevel">
<path d="M4.6 6.9 V19.8 M14 6.9 L5.6 13.6 L14.2 19.8"/>
<path d="M18.6 6.9 V19.8"/>
<path d="M24 19.8 V6.9 L32.4 19.8 V6.9"/>
<path d="M47.2 7.9 Q45.8 7 43 7 Q36.2 7 36.2 13.4 Q36.2 19.7 42.6 19.7 Q47.3 19.7 47.3 15.5 V13 H44"/>
<path d="M49.8 7.2 H53.3 Q58.4 7.2 58.4 12.6 V19.8"/>
<path d="M63 19.8 V6.9 L71.4 19.8 V6.9"/>
<path d="M74.4 7.8 H85.2 M79.8 7.8 V19.8"/>
</g><rect x="50.9" y="13.4" width="2.5" height="2.4" fill="#2b2727"/></svg>
<div class="abs" style="left:132.5px;top:16px;font-size:15px;line-height:24px;color:#333;font-weight:bold;white-space:nowrap">金蚁</div>
<div class="abs" style="left:174px;top:13px;width:1px;height:27.5px;background:#e2e2e2"></div>
<div class="abs" style="left:186.5px;top:15.5px;font-size:14.2px;line-height:24px;color:#333;font-weight:bold;white-space:nowrap">用户控制台</div>

<svg class="abs" style="left:1056px;top:18.8px" width="20" height="20" viewBox="0 0 20 20">
 <path d="M2.4 9.6 A7.7 7.7 0 1 1 11.2 16.4" fill="none" stroke="#555" stroke-width="1.35"/>
 <path d="M2.2 9.5 H5.6" stroke="#555" stroke-width="1.35"/>
 <path d="M6.8 10.3 Q9.6 12.2 12.4 10.3" fill="none" stroke="#555" stroke-width="1.6"/>
 <ellipse cx="9.6" cy="15.1" rx="1.8" ry="1.15" fill="#999" stroke="#555" stroke-width="1.1"/>
</svg>
<svg class="abs" style="left:1102px;top:19.8px" width="17" height="18" viewBox="0 0 17 18">
 <path d="M3.5 12.3 V7.8 C3.5 4.6 5.7 2.4 8.5 2.4 C11.3 2.4 13.5 4.6 13.5 7.8 V12.3" fill="none" stroke="#555" stroke-width="1.3"/>
 <path d="M0.8 12.4 H16.2" stroke="#555" stroke-width="1.3"/>
 <path d="M6.8 12.8 A1.7 1.7 0 0 0 10.2 12.8" fill="none" stroke="#555" stroke-width="1.2"/>
 <path d="M8.5 0.9 V2.4" stroke="#555" stroke-width="1.2"/>
</svg>
<div class="abs" style="left:1111.8px;top:12.9px;width:14.6px;height:14.6px;border-radius:50%;background:#e06a0c;color:#fff;font:bold 10.5px/14.6px 'Liberation Sans',sans-serif;text-align:center;letter-spacing:-0.4px">75</div>
<svg class="abs" style="left:1145px;top:19px" width="20" height="18" viewBox="0 0 20 18">
 <path d="M1.8 1.4 H3.9 Q4.8 1.4 4.8 2.4 V11.3 Q4.8 12.2 5.7 12.2 H16.6 Q17.5 12.2 17.5 11.3 V5 Q17.5 4.2 16.6 4.2 H7.4" fill="none" stroke="#666" stroke-width="1.3" stroke-linejoin="round"/>
 <circle cx="7.6" cy="15.2" r="1.1" fill="#555"/>
 <circle cx="14.5" cy="15.2" r="1.1" fill="#555"/>
</svg>
<svg class="abs" style="left:1190px;top:19px" width="19" height="17" viewBox="0 0 19 17">
 <rect x="1.6" y="1.3" width="15.9" height="10.6" rx="2" fill="none" stroke="#666" stroke-width="1.3"/>
 <path d="M5 15.5 H13.8" stroke="#666" stroke-width="1.3"/>
 <path d="M8.6 4.6 C9.1 5.8 11.4 6.6 11.1 8.3 C10.9 9.6 9 9.8 8.5 8.7 C8.1 7.8 8.4 6.6 8.6 4.6 Z" fill="#777"/>
</svg>
<svg class="abs" style="left:1236px;top:17px" width="20" height="20" viewBox="0 0 20 20">
 <path d="M1.5 8.2 A8.6 8.6 0 0 1 18.5 8.2" fill="none" stroke="#555" stroke-width="1.35"/>
 <path d="M1.5 11.4 A8.6 8.6 0 0 0 18.5 11.4" fill="none" stroke="#555" stroke-width="1.35"/>
 <path d="M7.3 12.3 L10 6.1 L12.7 12.3 M8.3 10.3 H11.7" fill="none" stroke="#555" stroke-width="1.5"/>
</svg>
<svg class="abs" style="left:1283.8px;top:15.4px" width="23" height="23" viewBox="0 0 23 23">
 <defs><clipPath id="av"><circle cx="11.5" cy="11.5" r="11.4"/></clipPath></defs>
 <g clip-path="url(#av)">
  <rect width="23" height="23" fill="#f6d600"/>
  <path d="M0 15.5 L4 16.5 L8 15 L10.5 18 L14 19 L17 21.5 L23 18.5 V23 H0 Z" fill="#1e9e35"/>
  <path d="M4 19 L7.5 17 L10 21 L8 23 H4 Z" fill="#0f5e2a"/>
  <path d="M13 19 L16 18 L17.5 22 L14 23 Z" fill="#126a2c"/>
  <ellipse cx="10.2" cy="7" rx="3.4" ry="2.9" fill="#4b2f22"/>
  <ellipse cx="22.3" cy="11.4" rx="1.6" ry="2.2" fill="#4b2f22"/>
  <ellipse cx="1.5" cy="6.3" rx="1.4" ry="2" fill="#5a3a20"/>
  <path d="M11.2 9.5 L11.9 23" stroke="#27c93a" stroke-width="1.8"/>
 </g>
</svg>

<div class="abs" style="left:1316.5px;top:16px;font-size:14px;line-height:22px;font-weight:bold;color:#333;letter-spacing:0.05px;white-space:nowrap">3061628584@qq.com</div>

</div>
</div>
</body></html>
